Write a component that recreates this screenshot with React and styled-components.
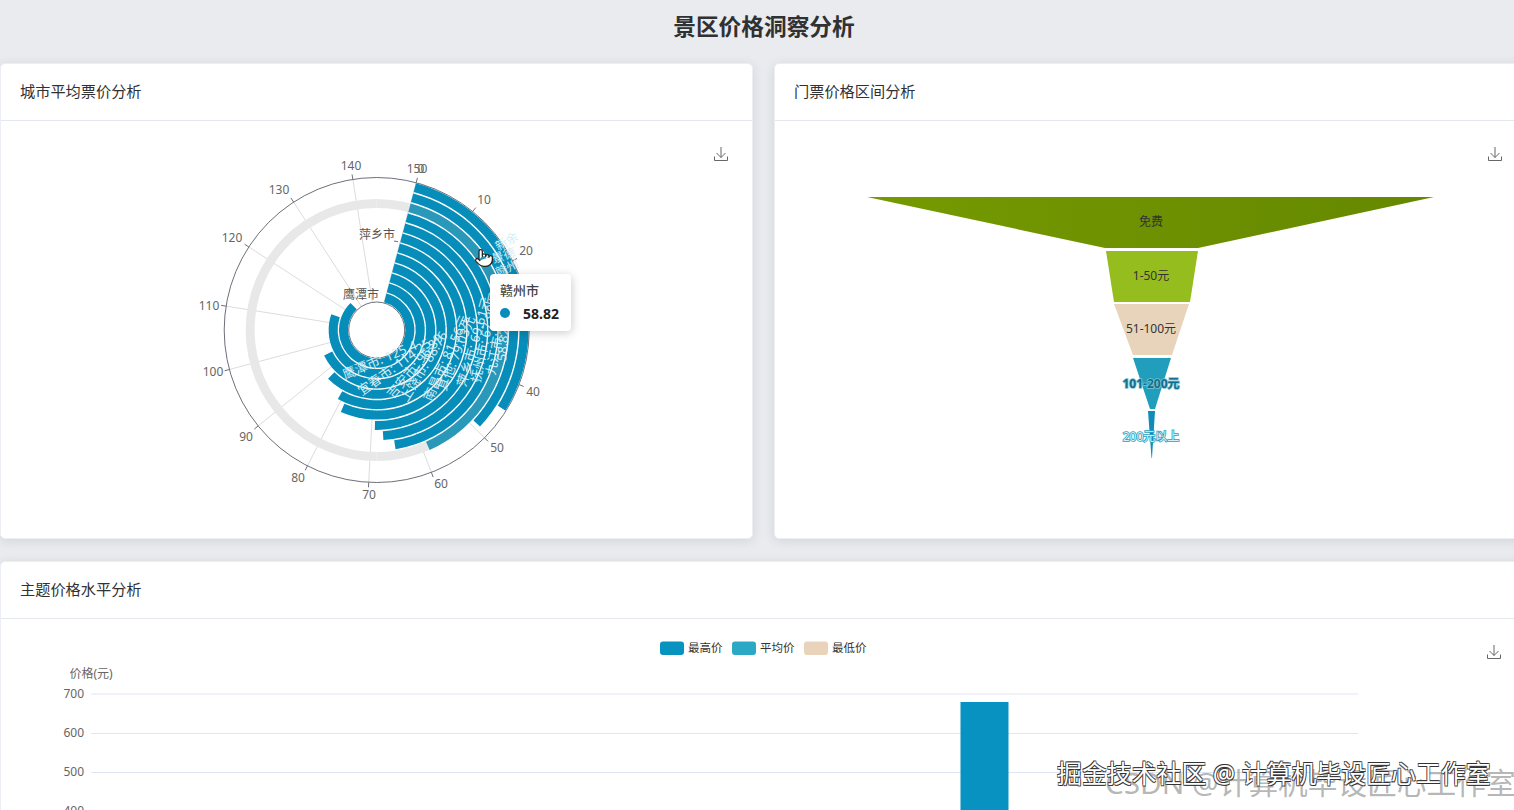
import React from "react";
import styled, { createGlobalStyle } from "styled-components";
import { Pointer } from "lucide-react";

const FONT = '"Noto Sans", "Noto Sans CJK SC", sans-serif';

const CX = 376.7;
const CY = 330;
const INNER = 28;
const OUTER = 152.5;
const BAND = (OUTER - INNER) / 12;
const START = 15;
const PER_UNIT = 2.4;

const RINGS = [125.4, 114.2, 95.5, 87.5, 81, 78.6, 69.2, 67.3, 65, 58.82, 49.2, 44.6];
const HOVER_RING = 9;

const BAR_LABELS = [
  { text: "鹰潭市: 125.4", x: 343, y: 375, rot: -23 },
  { text: "宜春市: 114.25", x: 359, y: 392, rot: -36 },
  { text: "吉安市: 96.89", x: 389, y: 396, rot: -50 },
  { text: "上饶市: 88.76", x: 403, y: 400, rot: -59 },
  { text: "南昌市: 81.56元", x: 427, y: 400, rot: -66 },
  { text: "其他: 79.03元", x: 441, y: 390, rot: -68 },
  { text: "萍乡市: 69.61元", x: 461, y: 386, rot: -74 },
  { text: "抚州市: 67.99元", x: 475, y: 382, rot: -78 },
  { text: "九江市: 65", x: 490, y: 375, rot: -80 },
  { text: "58.82元", x: 501, y: 361, rot: -85 },
  { text: "新余", x: 496, y: 247, rot: -30, short: true },
  { text: "景德", x: 492, y: 259, rot: -18, short: true },
  { text: "赣州", x: 496, y: 273, rot: -25, short: true },
];

// the label of 30 sits under the tooltip in the picture, so it has no text here
const TICKS = [
  { value: 150, x: 417, y: 168 },
  { value: 10, x: 484, y: 199 },
  { value: 20, x: 526, y: 250 },
  { value: 30 },
  { value: 40, x: 533, y: 391 },
  { value: 50, x: 497, y: 447 },
  { value: 60, x: 441, y: 483 },
  { value: 70, x: 369, y: 494 },
  { value: 80, x: 298, y: 477 },
  { value: 90, x: 246, y: 436 },
  { value: 100, x: 213, y: 371 },
  { value: 110, x: 209, y: 305 },
  { value: 120, x: 232, y: 237 },
  { value: 130, x: 279, y: 189 },
  { value: 140, x: 351, y: 165 },
];

const FUNNEL = [
  { label: "免费", tone: "dark", fill: "url(#freeFill)", points: "867,197 1434,197 1198,248 1105,248", y: 221 },
  { label: "1-50元", tone: "dark", fill: "#95bd1d", points: "1106,251 1198,251 1190,302 1114,302", y: 275 },
  { label: "51-100元", tone: "dark", fill: "#e8d3bb", points: "1114,304 1189,304 1172,355 1133,355", y: 328 },
  { label: "101-200元", tone: "teal", fill: "#219ebc", points: "1133,358 1171,358 1155,409 1150,409", y: 383 },
  { label: "200元以上", tone: "light", fill: "#0f8cb8", points: "1148,411 1155,411 1152,458 1151.5,458", y: 436 },
];

const LEGEND = [
  { label: "最高价", color: "#0892c0", x: 660 },
  { label: "平均价", color: "#2aa8c4", x: 732 },
  { label: "最低价", color: "#ead3bb", x: 804 },
];

const GRID_Y = [
  { label: "700", y: 694 },
  { label: "600", y: 733.5 },
  { label: "500", y: 772.5 },
  { label: "400", y: 811 },
];

const polar = (r, deg) => {
  const a = (deg * Math.PI) / 180;
  return [CX + r * Math.sin(a), CY - r * Math.cos(a)];
};

const arcPath = (r0, r1, from, to) => {
  const large = to - from > 180 ? 1 : 0;
  const [ax, ay] = polar(r1, from);
  const [bx, by] = polar(r1, to);
  const [cx, cy] = polar(r0, to);
  const [dx, dy] = polar(r0, from);
  return `M${ax} ${ay}A${r1} ${r1} 0 ${large} 1 ${bx} ${by}L${cx} ${cy}A${r0} ${r0} 0 ${large} 0 ${dx} ${dy}Z`;
};

const GlobalStyle = createGlobalStyle`
  html, body {
    margin: 0;
    height: 810px;
    overflow: hidden;
    background: #e9ebef;
  }
  body {
    font-family: ${FONT};
  }
`;

const Page = styled.div`
  position: relative;
  width: 1528px;
  height: 810px;
  overflow: hidden;
  background: #e9ebef;
`;

const TitleBar = styled.header`
  height: 63px;
  display: flex;
  justify-content: center;
  padding-top: 10px;
  box-sizing: border-box;
`;

const PageTitle = styled.h1`
  margin: 0;
  font-size: 22.7px;
  line-height: 34px;
  font-weight: 700;
  color: #303133;
`;

const Grid = styled.main`
  display: grid;
  grid-template-columns: 753px 753px;
  gap: 22px 21px;
`;

const Card = styled.section`
  grid-column: ${(props) => (props.$wide ? "1 / -1" : "auto")};
  background: #fff;
  border: 1px solid #ebeef5;
  border-radius: 5px;
  box-shadow: 0 2px 12px rgba(0, 0, 0, 0.1);
  overflow: hidden;
`;

const CardHeader = styled.div`
  height: 52px;
  padding: 0 0 4px 19px;
  display: flex;
  align-items: center;
  border-bottom: 1px solid #e4e7ed;
  font-size: 15.2px;
  color: #303133;
`;

const ChartBody = styled.div`
  position: relative;
  height: ${(props) => props.$height}px;
`;

const ChartSvg = styled.svg`
  display: block;
  font-family: ${FONT};
`;

const AxisText = styled.text`
  font-size: 12px;
  fill: #666;
  text-anchor: ${(props) => props.$anchor || "middle"};
  dominant-baseline: central;
`;

const RadiusText = styled.text`
  font-size: 12px;
  fill: #555;
  text-anchor: end;
  dominant-baseline: central;
`;

const BarText = styled.text`
  font-size: ${(props) => (props.$short ? 12 : 13)}px;
  fill: #d3edf6;
  dominant-baseline: central;
`;

const FunnelText = styled.text`
  font-size: 12px;
  text-anchor: middle;
  dominant-baseline: central;
  paint-order: stroke;
  fill: ${(props) => (props.$tone === "light" ? "#d5f0f6" : props.$tone === "teal" ? "#0f6f8c" : "#333")};
  stroke: ${(props) => (props.$tone === "light" ? "#2aa0c0" : props.$tone === "teal" ? "#7fc4d6" : "none")};
  stroke-width: ${(props) => (props.$tone === "dark" ? 0 : 1.6)}px;
  font-weight: ${(props) => (props.$tone === "teal" ? 700 : 400)};
`;

const LegendText = styled.text`
  font-size: 11.5px;
  fill: #333;
  dominant-baseline: central;
`;

const Tooltip = styled.div`
  position: absolute;
  left: 489px;
  top: 153px;
  width: 81px;
  height: 57px;
  box-sizing: border-box;
  padding: 7px 10px;
  background: #fff;
  border-radius: 4px;
  box-shadow: 1px 2px 10px rgba(0, 0, 0, 0.2);
`;

const TooltipTitle = styled.div`
  font-size: 13px;
  line-height: 18px;
  color: #444;
  font-weight: 500;
`;

const TooltipRow = styled.div`
  display: flex;
  align-items: center;
  margin-top: 4px;
  height: 20px;
`;

const TooltipDot = styled.span`
  width: 10px;
  height: 10px;
  border-radius: 50%;
  background: #068dba;
`;

const TooltipValue = styled.span`
  margin-left: 13px;
  font-size: 14px;
  font-weight: 700;
  color: #222;
`;

const HandCursor = styled.div`
  position: absolute;
  left: 473px;
  top: 127px;
  line-height: 0;
`;

const Watermark = styled.div`
  position: absolute;
  left: ${(props) => props.$left}px;
  top: ${(props) => props.$top}px;
  line-height: 30px;
  white-space: nowrap;
  pointer-events: none;
`;

const JuejinMark = styled(Watermark)`
  font-size: 24.9px;
  color: #fff;
  text-shadow: -0.7px -0.7px 0 #333, 0.7px 0.7px 0 #333, 0.7px -0.7px 0 #555, -0.7px 0.7px 0 #555;
`;

const CsdnMark = styled(Watermark)`
  font-size: 29.7px;
  color: rgba(120, 120, 120, 0.55);
`;

const DownloadIcon = ({ x, y }) => (
  <g transform={`translate(${x} ${y})`} fill="none" stroke="#666" strokeWidth="1">
    <path d="M7 0V10.5M2.5 6L7 10.5L11.5 6" />
    <path d="M0.5 9.5V13.5H13.5V9.5" />
  </g>
);

const PolarChart = () => (
  <ChartBody $height={417}>
    <ChartSvg width="751" height="417" viewBox="1 121 751 417">
      {TICKS.map(({ value }) => {
        const deg = START + value * PER_UNIT;
        const [x0, y0] = polar(INNER, deg);
        const [x1, y1] = polar(OUTER, deg);
        return <line key={value} x1={x0} y1={y0} x2={x1} y2={y1} stroke="#dcdcdc" />;
      })}
      <circle cx={CX} cy={CY} r={OUTER} fill="none" stroke="#6e7079" />
      <circle cx={CX} cy={CY} r={INNER} fill="#fff" stroke="#6e7079" />
      {TICKS.map(({ value, x, y }) => {
        const deg = START + value * PER_UNIT;
        const [x0, y0] = polar(OUTER, deg);
        const [x1, y1] = polar(OUTER + 5, deg);
        return (
          <g key={value}>
            <line x1={x0} y1={y0} x2={x1} y2={y1} stroke="#6e7079" />
            {x && <AxisText x={x} y={y}>{value}</AxisText>}
          </g>
        );
      })}
      <AxisText x="421" y="168">0</AxisText>
      <path
        d={arcPath(INNER + BAND * HOVER_RING + 0.7, INNER + BAND * (HOVER_RING + 1) - 0.7, 0, 179.99)}
        fill="#e8e8e8"
      />
      <path
        d={arcPath(INNER + BAND * HOVER_RING + 0.7, INNER + BAND * (HOVER_RING + 1) - 0.7, 180, 359.99)}
        fill="#e8e8e8"
      />
      {RINGS.map((value, i) => (
        <path
          key={i}
          d={arcPath(INNER + BAND * i + 0.7, INNER + BAND * (i + 1) - 0.7, START, START + value * PER_UNIT)}
          fill={i === HOVER_RING ? "#2a98b9" : "#068dba"}
        />
      ))}
      <line x1="398" y1="241.7" x2="394" y2="241" stroke="#6e7079" />
      <RadiusText x="395" y="234">萍乡市</RadiusText>
      <RadiusText x="379" y="294">鹰潭市</RadiusText>
      {BAR_LABELS.map((label) => (
        <BarText
          key={label.text}
          x={label.x}
          y={label.y}
          $short={label.short}
          transform={`rotate(${label.rot} ${label.x} ${label.y})`}
        >
          {label.text}
        </BarText>
      ))}
      <DownloadIcon x={714} y={147} />
    </ChartSvg>
    <HandCursor>
      <Pointer size={20} fill="#fff" stroke="#222" strokeWidth={1.5} />
    </HandCursor>
    <Tooltip>
      <TooltipTitle>赣州市</TooltipTitle>
      <TooltipRow>
        <TooltipDot />
        <TooltipValue>58.82</TooltipValue>
      </TooltipRow>
    </Tooltip>
  </ChartBody>
);

const FunnelChart = () => (
  <ChartBody $height={417}>
    <ChartSvg width="751" height="417" viewBox="775 121 751 417">
      <defs>
        <linearGradient id="freeFill" x1="0" x2="1" y1="0" y2="0">
          <stop offset="0" stopColor="#759a00" />
          <stop offset="1" stopColor="#658800" />
        </linearGradient>
      </defs>
      {FUNNEL.map((part) => (
        <polygon key={part.label} points={part.points} fill={part.fill} />
      ))}
      {FUNNEL.map((part) => (
        <FunnelText key={part.label} x="1151" y={part.y} $tone={part.tone}>
          {part.label}
        </FunnelText>
      ))}
      <DownloadIcon x={1488} y={147} />
    </ChartSvg>
  </ChartBody>
);

const BarChart = () => (
  <ChartBody $height={260}>
    <ChartSvg width="1525" height="260" viewBox="1 619 1525 260">
      {LEGEND.map((item) => (
        <g key={item.label}>
          <rect x={item.x} y="641.5" width="24" height="13.5" rx="3" fill={item.color} />
          <LegendText x={item.x + 28} y="647.5">{item.label}</LegendText>
        </g>
      ))}
      <AxisText x="91" y="673">价格(元)</AxisText>
      {GRID_Y.map((row) => (
        <g key={row.label}>
          <line x1="91" y1={row.y} x2="1358" y2={row.y} stroke="#e0e6f1" />
          <AxisText x="84" y={row.y - 1} $anchor="end">{row.label}</AxisText>
        </g>
      ))}
      <rect x="960.5" y="702" width="48" height="120" fill="#0792c2" />
      <DownloadIcon x={1487} y={645} />
    </ChartSvg>
  </ChartBody>
);

export default function App() {
  return (
    <Page>
      <GlobalStyle />
      <TitleBar>
        <PageTitle>景区价格洞察分析</PageTitle>
      </TitleBar>
      <Grid>
        <Card>
          <CardHeader>城市平均票价分析</CardHeader>
          <PolarChart />
        </Card>
        <Card>
          <CardHeader>门票价格区间分析</CardHeader>
          <FunnelChart />
        </Card>
        <Card $wide>
          <CardHeader>主题价格水平分析</CardHeader>
          <BarChart />
        </Card>
      </Grid>
      <CsdnMark $left={1105} $top={768}>CSDN @计算机毕设匠心工作室</CsdnMark>
      <JuejinMark $left={1057} $top={758}>掘金技术社区 @ 计算机毕设匠心工作室</JuejinMark>
    </Page>
  );
}
